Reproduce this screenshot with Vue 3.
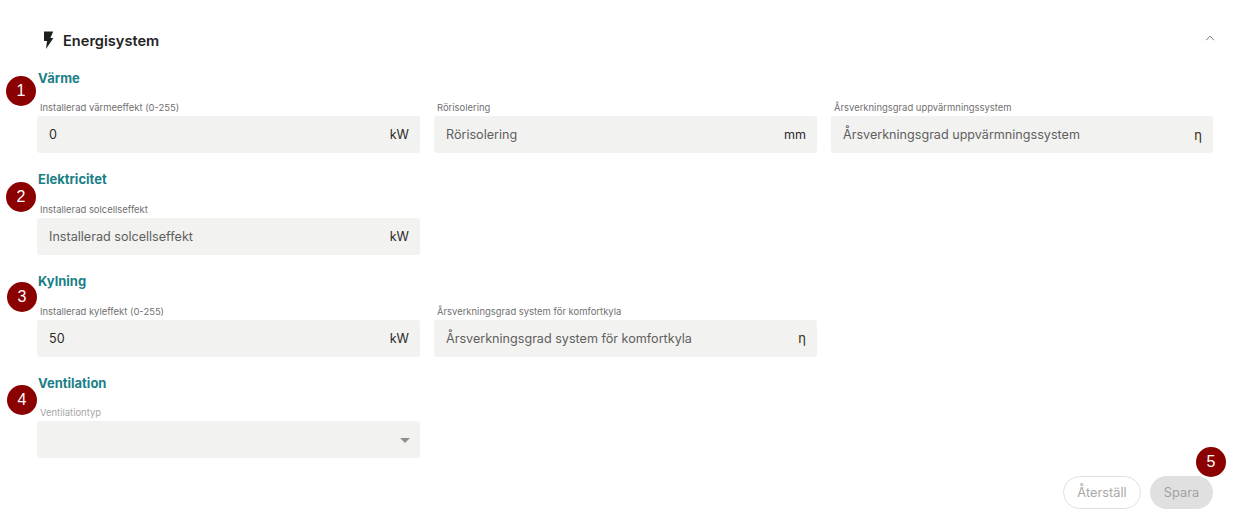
<script setup>
const sections = [
  { title: 'Värme', fields: [
    { label: 'Installerad värmeeffekt (0-255)', value: '0', unit: 'kW' },
    { label: 'Rörisolering', placeholder: 'Rörisolering', unit: 'mm' },
    { label: 'Årsverkningsgrad uppvärmningssystem', placeholder: 'Årsverkningsgrad uppvärmningssystem', unit: 'η', accent: true },
  ]},
  { title: 'Elektricitet', fields: [
    { label: 'Installerad solcellseffekt', placeholder: 'Installerad solcellseffekt', unit: 'kW' },
  ]},
  { title: 'Kylning', fields: [
    { label: 'Installerad kyleffekt (0-255)', value: '50', unit: 'kW' },
    { label: 'Årsverkningsgrad system för komfortkyla', placeholder: 'Årsverkningsgrad system för komfortkyla', unit: 'η' },
  ]},
  { title: 'Ventilation', fields: [
    { label: 'Ventilationtyp', select: true },
  ]},
]
const badges = [
  { n: 1, cls: 'b1' }, { n: 2, cls: 'b2' }, { n: 3, cls: 'b3' }, { n: 4, cls: 'b4' }, { n: 5, cls: 'b5' },
]
</script>

<template>
  <div class="page">
    <header class="head">
      <div class="head-left">
        <svg class="bolt" width="12" height="18" viewBox="0 0 12 18"><path d="M2 0.5H11.2L8.4 7H11.4L4 18L5 10H2z" fill="#1f1f1f"/></svg>
        <h2 class="head-title">Energisystem</h2>
      </div>
      <svg class="chev" width="12" height="8" viewBox="0 0 12 8"><path d="M2 6.2L6 2.2l4 4" fill="none" stroke="#777" stroke-width="1"/></svg>
    </header>

    <section v-for="s in sections" :key="s.title" class="sec">
      <h3 class="sec-title">{{ s.title }}</h3>
      <div class="grid">
        <div v-for="f in s.fields" :key="f.label" class="field">
          <label class="lab" :class="{ dis: f.select }">{{ f.label }}</label>
          <div class="box">
            <span v-if="f.value" class="val">{{ f.value }}</span>
            <span v-else-if="f.placeholder" class="ph">{{ f.placeholder }}</span>
            <span v-else></span>
            <span v-if="f.unit" class="unit" :class="{ eta: f.unit === 'η' }">{{ f.unit }}</span>
            <span v-if="f.select" class="caret"></span>
          </div>
        </div>
      </div>
    </section>

    <footer class="foot">
      <button class="btn ghost" disabled>Återställ</button>
      <button class="btn solid" disabled>Spara</button>
    </footer>

    <span v-for="b in badges" :key="b.n" class="badge" :class="b.cls">{{ b.n }}</span>
  </div>
</template>

<style scoped>
.page {
  position: relative;
  width: 1237px;
  height: 531px;
  box-sizing: border-box;
  padding: 31px 24px 0 37px;
  background: #fff;
  font-family: Inter, "Noto Sans", sans-serif;
  color: #1f1f1f;
  overflow: hidden;
}
.head { display: flex; align-items: center; justify-content: space-between; height: 20px; padding: 0 0 0 5px; margin-bottom: 17.7px; }
.head-left { display: flex; align-items: center; gap: 9px; }
.bolt { display: block; margin-top: -3px; }
.chev { margin-right: -3px; margin-top: -6px; }
.head-title { margin: 0; font-size: 14.6px; font-weight: 600; line-height: 20px; color: #242424; }
.sec { height: 101.67px; }
.sec-title { margin: 0; padding-left: 1px; font-size: 13px; font-weight: 700; line-height: 18px; color: #1a7f86; }
.grid { display: grid; grid-template-columns: 383px 383px 382px; column-gap: 14px; margin-top: 13.7px; }
.field { display: flex; flex-direction: column; }
.lab { font-size: 9.45px; line-height: 14px; padding: 1px 0 0 3px; color: #707070; }
.lab.dis { color: #a6a6a6; }
.box { position: relative; margin-top: 1px; height: 37px; box-sizing: border-box; background: #f2f2f0; border-radius: 3px; display: flex; align-items: center; justify-content: space-between; padding: 0 11px 0 12px; font-size: 12.6px; }
.val { color: #2a2a2a; }
.ph { color: #5f5f5f; }
.unit { color: #2a2a2a; }
.eta { color: #3a2a10; font-size: 13px; }
.caret { width: 0; height: 0; border-left: 5px solid transparent; border-right: 5px solid transparent; border-top: 5px solid #8f8f8f; margin-right: -1px; margin-top: 1px; }
.foot { position: absolute; right: 24px; top: 476px; display: flex; gap: 9px; }
.btn { height: 33px; border-radius: 17px; font-family: inherit; font-size: 12.8px; padding: 0; box-sizing: border-box; }
.ghost { width: 78px; background: #fff; border: 1px solid #e0e0e0; color: #a8a8a8; }
.solid { width: 63px; background: #e0e0e0; border: 0; color: #a0a0a0; }
.badge { position: absolute; width: 30px; height: 30px; border-radius: 50%; background: #8b0000; color: #fff; font-size: 16px; display: flex; align-items: center; justify-content: center; font-family: "Liberation Sans", sans-serif; }
.b1 { left: 6px; top: 76px; }
.b2 { left: 6px; top: 182px; }
.b3 { left: 7px; top: 282px; }
.b4 { left: 7px; top: 385px; }
.b5 { left: 1196px; top: 447px; }
</style>
